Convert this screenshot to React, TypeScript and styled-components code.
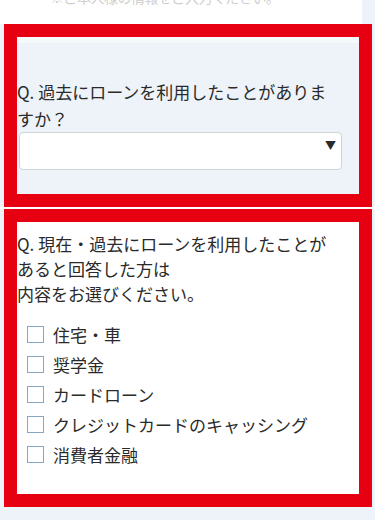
import React from 'react';
import styled, { createGlobalStyle } from 'styled-components';

const GlobalStyle = createGlobalStyle`
  html, body {
    margin: 0;
    padding: 0;
    background: #eef3f9;
    font-family: "Noto Sans CJK JP", "Noto Sans", sans-serif;
    color: #333;
  }
`;

const Page = styled.div`
  width: 375px;
  min-height: 520px;
  display: flex;
  flex-direction: column;
`;

const TopNote = styled.div`
  width: 362px;
  height: 24px;
  background: #fff;
  overflow: hidden;
`;

const NoteText = styled.p`
  margin: -12px 0 0 50px;
  font-size: 14px;
  line-height: 18px;
  letter-spacing: -0.5px;
  color: #cfcfcf;
`;

const Frame = styled.section<{ $tint?: boolean }>`
  box-sizing: border-box;
  width: 368px;
  margin-left: 4px;
  border: 13px solid #e60012;
  background: ${(p) =>
    p.$tint ? 'linear-gradient(#f6f9fc 0, #f6f9fc 6px, #edf3f9 6px)' : '#fff'};
  padding: ${(p) => (p.$tint ? '41px 0 24px' : '9px 0 25px')};
`;

const Gap = styled.div`
  height: 2px;
  background: #fff;
`;

const Question = styled.p<{ $tight?: boolean }>`
  margin: 0;
  font-size: 17px;
  line-height: ${(p) => (p.$tight ? '25px' : '27px')};
  color: #2a2a2a;
  white-space: nowrap;
`;

const SelectWrap = styled.div`
  position: relative;
  margin: 0 17px 0 2px;
`;

const Select = styled.select`
  display: block;
  box-sizing: border-box;
  width: 100%;
  height: 38px;
  appearance: none;
  border: 1px solid #cfd4d9;
  border-radius: 4px;
  background: #fff;
  font-family: inherit;
  font-size: 16px;
`;

const Arrow = styled.span`
  position: absolute;
  top: 7px;
  right: 6px;
  font-size: 11px;
  line-height: 12px;
  color: #2b2b2b;
  pointer-events: none;
`;

const Options = styled.ul`
  list-style: none;
  margin: 13px 0 0;
  padding: 0 0 0 10px;
  display: flex;
  flex-direction: column;
`;

const Option = styled.li`
  height: 30px;
  display: flex;
  align-items: center;
  gap: 9px;
  font-size: 17px;
  color: #2a2a2a;
`;

const Box = styled.input`
  appearance: none;
  margin: 0;
  width: 17px;
  height: 17px;
  box-sizing: border-box;
  border: 1px solid #8aa6c1;
  background: #fff;
`;

const items = ['住宅・車', '奨学金', 'カードローン', 'クレジットカードのキャッシング', '消費者金融'];

export default function App() {
  return (
    <Page>
      <GlobalStyle />
      <TopNote>
        <NoteText>※ご本人様の情報をご入力ください。</NoteText>
      </TopNote>
      <Frame $tint>
        <Question>
          Q. 過去にローンを利用したことがありま
          <br />
          すか？
        </Question>
        <SelectWrap>
          <Select defaultValue="">
            <option value=""></option>
          </Select>
          <Arrow>▼</Arrow>
        </SelectWrap>
      </Frame>
      <Gap />
      <Frame>
        <Question $tight>
          Q. 現在・過去にローンを利用したことが
          <br />
          あると回答した方は
          <br />
          内容をお選びください。
        </Question>
        <Options>
          {items.map((t) => (
            <Option key={t}>
              <Box type="checkbox" />
              {t}
            </Option>
          ))}
        </Options>
      </Frame>
    </Page>
  );
}
